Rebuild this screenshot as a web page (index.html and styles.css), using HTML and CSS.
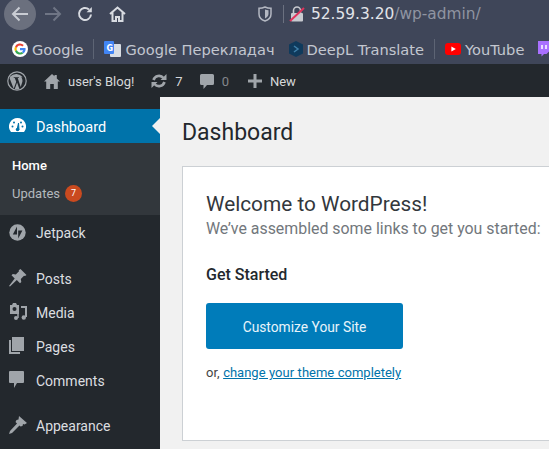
FILE: index.html

```html
<!DOCTYPE html>
<html lang="en">

<head>
    <meta charset="UTF-8" />
    <meta name="viewport" content="width=device-width, initial-scale=1.0" />
    <title>Dashboard</title>

    <link rel="stylesheet" href="styles.css">
</head>

<body>
    <header class="browser">
        <div class="nav-row">
            <div class="back-btn">
                <svg width="18" height="16" viewBox="0 0 18 16" fill="none" stroke="#c9ccd3" stroke-width="2">
                    <path d="M17 8H2M8.500 1.500L2 8l6.500 6.500" />
                </svg>
            </div>
            <svg class="nav-icon forward" width="18" height="16" viewBox="0 0 18 16" fill="none" stroke="#6f7585" stroke-width="2">
                <path d="M1 8h15M9.500 1.500L16 8l-6.500 6.500" />
            </svg>
            <svg class="nav-icon reload" width="16" height="16" viewBox="0 0 16 16" fill="none" stroke="#d8dbe1" stroke-width="2">
                <path d="M14 8.500A6 6 0 1 1 12 3.500" />
                <path d="M14.800 1v5.200H9.600z" fill="#d8dbe1" stroke="none" />
            </svg>
            <svg class="nav-icon home" width="17" height="16" viewBox="0 0 17 16" fill="none" stroke="#d8dbe1" stroke-width="2">
                <path d="M1 8l7.500-6.500L16 8M3.500 6.500V15h3.500v-4h3v4h3.500V6.500" />
            </svg>
            <svg class="shield" width="14" height="16" viewBox="0 0 14 16" fill="none" stroke="#b4b8c2" stroke-width="1.500">
                <path d="M7 1c2 1 4 1.300 6 1.300V8c0 3.500-3 6-6 7-3-1-6-3.500-6-7V2.300C3 2.300 5 2 7 1z" />
                <path d="M7 3.500c1 .5 2.500.7 3.500.7V8c0 2-2 3.800-3.500 4.500z" fill="#b4b8c2" stroke="none" />
            </svg>
            <div class="url-sep"></div>
            <svg class="lock" width="16" height="18" viewBox="0 0 16 18">
                <path d="M4.500 8V5.500a3.500 3.500 0 0 1 7 0V8" fill="none" stroke="#c8cad0" stroke-width="1.600" />
                <rect x="2" y="8" width="12" height="8.500" rx="1" fill="#c8cad0" />
                <path d="M1 16L15 3" stroke="#e0335c" stroke-width="2" />
            </svg>
            <div class="url"><span class="url-host">52.59.3.20</span>/wp-admin/</div>
        </div>
        <div class="bookmarks">
            <span class="bookmark">
                <svg width="16" height="16" viewBox="0 0 16 16">
                    <circle cx="8" cy="8" r="8" fill="#fff" />
                    <path d="M8 4.600a3.400 3.400 0 0 1 2.300.9l1.500-1.500A5.600 5.600 0 0 0 3 5.600l1.800 1.300A3.400 3.400 0 0 1 8 4.600z" fill="#ea4335" />
                    <path d="M4.800 6.900L3 5.600a5.600 5.600 0 0 0 0 4.800l1.800-1.300a3.400 3.400 0 0 1 0-2.200z" fill="#fbbc05" />
                    <path d="M4.800 9.100L3 10.400a5.600 5.600 0 0 0 8.500 1.900l-1.700-1.300a3.400 3.400 0 0 1-5-1.900z" fill="#34a853" />
                    <path d="M13.500 7H8v2.200h3.200a2.800 2.800 0 0 1-1.400 1.800l1.700 1.300A5.500 5.500 0 0 0 13.500 7z" fill="#4285f4" />
                </svg>
                Google
            </span>
            <span class="bm-sep"></span>
            <span class="bookmark">
                <svg width="17" height="16" viewBox="0 0 17 16">
                    <rect x="6" y="3" width="11" height="13" rx="1" fill="#d9dde3" />
                    <rect width="10" height="13" rx="1" fill="#4285f4" />
                    <text x="2.500" y="9.500" class="gt-letter">G</text>
                </svg>
                Google Перекладач
            </span>
            <span class="bookmark deepl">
                <svg width="14" height="16" viewBox="0 0 14 16">
                    <path d="M7 0l7 3.500v9L7 16l-7-3.500v-9z" fill="#0f3a5c" />
                    <path d="M5 5l4 3-4 3" fill="none" stroke="#3f7fa8" stroke-width="1.500" />
                </svg>
                DeepL Translate
            </span>
            <span class="bm-sep"></span>
            <span class="bookmark">
                <svg width="16" height="12" viewBox="0 0 16 12">
                    <rect width="16" height="12" rx="3" fill="#f00" />
                    <path d="M6.400 3.400L10.800 6l-4.400 2.600z" fill="#fff" />
                </svg>
                YouTube
            </span>
            <svg class="twitch" width="14" height="16" viewBox="0 0 14 16">
                <path d="M2 0h12v9.500L10.500 13H8l-2.500 2.500V13H2z" fill="#a970ff" />
                <path d="M6 4v4M10 4v4" stroke="#fff" stroke-width="1.500" />
            </svg>
        </div>
    </header>

    <nav class="admin-bar">
        <svg class="bar-wp" width="20" height="20" viewBox="0 0 20 20">
            <circle cx="10" cy="10" r="9.200" fill="none" stroke="#a0a5aa" stroke-width="1.200" />
            <path d="M2.600 7.200L6.700 17.800 9.200 10.800 7.800 7.100H6.700V6.300h5.200v.8h-1.200l3 9 1.600-5.200c.5-1.800-.2-3.800-1-4.700.9-.2 1.500.1 1.500.1l-.1-.1A8.200 8.200 0 0 0 3.200 5.500z" fill="#a0a5aa" />
            <path d="M10.100 11.600l-2.300 6.500c1.500.4 3.100.4 4.600-.1z" fill="#a0a5aa" />
        </svg>
        <span class="bar-item site">
            <svg width="16" height="15" viewBox="0 0 16 15">
                <path d="M8 0l2.500 2.300V1h2.300v3.500L16 7.500h-2.200V15H9.800v-5H6.200v5H2.200V7.500H0z" fill="#a0a5aa" />
            </svg>
            user's Blog!
        </span>
        <span class="bar-item updates">
            <svg width="16" height="14" viewBox="0 0 16 14" fill="none" stroke="#a0a5aa" stroke-width="2.600">
                <path d="M2.500 6a5.800 5.800 0 0 1 10-2M13.500 8a5.800 5.800 0 0 1-10 2" />
                <path d="M15.500 0v6h-6zM.5 14V8h6z" fill="#a0a5aa" stroke="none" />
            </svg>
            7
        </span>
        <span class="bar-item comments">
            <svg width="14" height="15" viewBox="0 0 14 15">
                <path d="M1.500 0h11A1.500 1.500 0 0 1 14 1.500v8a1.500 1.500 0 0 1-1.500 1.500H7l-3.500 4v-4h-2A1.500 1.500 0 0 1 0 9.500v-8A1.500 1.500 0 0 1 1.500 0z" fill="#a0a5aa" />
            </svg>
            <span class="zero">0</span>
        </span>
        <span class="bar-item new">
            <svg width="14" height="14" viewBox="0 0 14 14">
                <path d="M5.500 0h3v5.500H14v3H8.500V14h-3V8.500H0v-3h5.500z" fill="#a0a5aa" />
            </svg>
            New
        </span>
    </nav>

    <div class="layout">
        <aside class="sidebar">
            <div class="menu-item current">
                <svg class="menu-icon" width="17" height="15" viewBox="0 0 17 15">
                    <path d="M8.500 0a8.500 8.500 0 0 0-7 13.300l.5.700h13l.5-.7a8.500 8.500 0 0 0-7-13.300z" fill="#fff" />
                    <path d="M8 12l1.500-7 .5 7z" fill="#0073aa" stroke="#0073aa" />
                    <circle cx="8.500" cy="11.500" r="1.700" fill="#0073aa" />
                    <circle cx="3.500" cy="8.500" r="1" fill="#0073aa" />
                    <circle cx="5" cy="4.500" r="1" fill="#0073aa" />
                    <circle cx="13.500" cy="8.500" r="1" fill="#0073aa" />
                    <circle cx="12" cy="4.500" r="1" fill="#0073aa" />
                </svg>
                Dashboard
            </div>
            <div class="submenu">
                <div class="sub-item active">Home</div>
                <div class="sub-item">Updates <span class="badge">7</span></div>
            </div>
            <div class="menu-item jetpack">
                <svg class="menu-icon" width="17" height="17" viewBox="0 0 17 17">
                    <circle cx="8.500" cy="8.500" r="8.200" fill="#a0a5aa" />
                    <path d="M8 2.500v8H3.800zM9.200 14.500v-8h4.200z" fill="#23282d" />
                </svg>
                Jetpack
            </div>
            <div class="menu-group">
                <div class="menu-item">
                    <svg class="menu-icon" width="18" height="18" viewBox="0 0 18 18">
                        <path d="M11.500 0l6 6-1.500 1-1-.3-3.200 3.200.5 3-1.300 1.300-3.200-3.200L1 17.500 0 17l5.700-7.500L2.500 6.300l1.300-1.300 3 .5L10 2.300l-.3-1z" fill="#a0a5aa" />
                    </svg>
                    Posts
                </div>
                <div class="menu-item">
                    <svg class="menu-icon" width="18" height="17" viewBox="0 0 18 17">
                        <path d="M1 2h2l1-2h3l1 2h2v9H1z" fill="#a0a5aa" />
                        <circle cx="5.500" cy="6" r="2" fill="#23282d" />
                        <path d="M12 4h5v10" fill="none" stroke="#a0a5aa" stroke-width="2" />
                        <circle cx="14.800" cy="14.500" r="2.200" fill="#a0a5aa" />
                        <path d="M9 10v5" stroke="#a0a5aa" stroke-width="1.500" />
                        <circle cx="7" cy="15" r="2" fill="#a0a5aa" />
                    </svg>
                    Media
                </div>
                <div class="menu-item">
                    <svg class="menu-icon" width="15" height="17" viewBox="0 0 15 17">
                        <rect x="3" width="12" height="14" fill="#a0a5aa" />
                        <path d="M1 3v13h10" fill="none" stroke="#a0a5aa" stroke-width="2" />
                    </svg>
                    Pages
                </div>
                <div class="menu-item">
                    <svg class="menu-icon" width="15" height="17" viewBox="0 0 15 17">
                        <path d="M1 0h13a1 1 0 0 1 1 1v10a1 1 0 0 1-1 1H8l-3 5v-5H1a1 1 0 0 1-1-1V1a1 1 0 0 1 1-1z" fill="#a0a5aa" />
                    </svg>
                    Comments
                </div>
            </div>
            <div class="menu-item appearance">
                <svg class="menu-icon" width="18" height="18" viewBox="0 0 18 18">
                    <path d="M10 0l8 7-2.500 1.500-1.500-.5-.5 2-2 .5-1-1L3 17l-3 1 1-3 7-7.500-1.500-1.500 1-2 2-.5z" fill="#a0a5aa" />
                </svg>
                Appearance
            </div>
        </aside>

        <main class="content">
            <h1 class="page-title">Dashboard</h1>
            <section class="welcome">
                <h2>Welcome to WordPress!</h2>
                <p class="about">We’ve assembled some links to get you started:</p>
                <h3>Get Started</h3>
                <a class="customize" href="#">Customize Your Site</a>
                <p class="or-line">or, <a href="#">change your theme completely</a></p>
            </section>
        </main>
    </div>
</body>

</html>
```

FILE: styles.css

```css
html,
body {
    margin: 0;
    height: 449px;
    overflow: hidden;
}

body {
    font-family: Roboto, sans-serif;
    background: #f1f1f1;
    display: flex;
    flex-direction: column;
}

/* ========== BROWSER CHROME ========== */
.browser {
    height: 64px;
    flex: none;
    background: #3f4659;
    font-family: "DejaVu Sans", sans-serif;
    overflow: hidden;
}

.nav-row {
    height: 28px;
    display: flex;
    align-items: center;
}

.back-btn {
    width: 32px;
    height: 32px;
    margin-left: 4px;
    margin-top: -1px;
    border-radius: 50%;
    background: #6b707e;
    flex: none;
    display: flex;
    align-items: center;
    justify-content: center;
}

.nav-icon {
    flex: none;
}

.forward {
    margin-left: 8px;
}

.reload {
    margin-left: 15px;
}

.home {
    margin-left: 16px;
}

.shield {
    margin-left: 132px;
    flex: none;
}

.url-sep {
    width: 1px;
    height: 18px;
    background: #6b7180;
    margin-left: 11px;
}

.lock {
    margin-left: 5px;
    flex: none;
}

.url {
    margin-left: 6px;
    font-size: 15.4px;
    color: #8f94a1;
    white-space: nowrap;
}

.url-host {
    color: #e2e4e9;
}

.bookmarks {
    height: 30px;
    margin-top: 6px;
    display: flex;
    align-items: center;
    padding-left: 12px;
    font-size: 14.6px;
    color: #c3c7d0;
    white-space: nowrap;
}

.bookmark {
    display: flex;
    align-items: center;
    gap: 4px;
    flex: none;
}

.bm-sep {
    width: 1px;
    height: 20px;
    background: #5d6474;
    margin: 0 10px;
    flex: none;
}

.deepl {
    margin-left: 14px;
}

.gt-letter {
    font-size: 8px;
    font-weight: bold;
    fill: #fff;
}

.twitch {
    margin-left: 12px;
    flex: none;
}

/* ========== ADMIN BAR ========== */
.admin-bar {
    height: 33px;
    box-sizing: border-box;
    flex: none;
    background: #23282d;
    color: #d6d8da;
    font-size: 13px;
    display: flex;
    align-items: center;
    padding: 1px 0 0 7px;
    white-space: nowrap;
}

.bar-wp {
    flex: none;
}

.bar-item {
    display: flex;
    align-items: center;
    gap: 8px;
}

.site {
    margin-left: 17px;
}

.updates {
    margin-left: 17px;
}

.comments {
    margin-left: 17px;
}

.zero {
    color: #83878b;
}

.new {
    margin-left: 19px;
}

/* ========== LAYOUT ========== */
.layout {
    flex: 1;
    display: flex;
    min-height: 0;
}

.sidebar {
    width: 160px;
    flex: none;
    background: #23282d;
    padding-top: 12px;
    color: #dcdee0;
    font-size: 14px;
}

.menu-item {
    height: 34px;
    box-sizing: border-box;
    display: flex;
    align-items: center;
    position: relative;
    padding: 1px 0 0 36px;
}

.menu-icon {
    position: absolute;
    left: 9px;
    top: 8px;
}

.current {
    background: #0073aa;
    color: #fff;
    font-size: 14.5px;
    padding-top: 3px;
}

.current .menu-icon {
    top: 9px;
}

.current::after {
    content: "";
    position: absolute;
    right: 0;
    top: 9px;
    border: 8px solid transparent;
    border-right-color: #f1f1f1;
    border-left-width: 0;
}

.submenu {
    background: #32373c;
    height: 72px;
    box-sizing: border-box;
    padding-top: 8px;
    font-size: 13px;
    color: #b4b9be;
}

.sub-item {
    height: 28px;
    padding-left: 12px;
    display: flex;
    align-items: center;
    gap: 5px;
}

.active {
    color: #fff;
    font-weight: 500;
}

.badge {
    width: 17px;
    height: 17px;
    border-radius: 50%;
    background: #ca4a1f;
    color: #fff;
    font-size: 9px;
    display: flex;
    align-items: center;
    justify-content: center;
}

.jetpack {
    margin-top: 1px;
    padding-top: 0;
}

.menu-group {
    margin-top: 11px;
}

.appearance {
    margin-top: 11px;
}

/* ========== CONTENT ========== */
.content {
    flex: 1;
    min-width: 0;
    padding: 21px 0 0 22px;
}

.page-title {
    margin: 0;
    font-size: 23px;
    font-weight: 400;
    line-height: 30px;
    color: #23282d;
}

.welcome {
    margin-top: 18px;
    height: 275px;
    box-sizing: border-box;
    background: #fff;
    border: 1px solid #ccd0d4;
    border-right: 0;
    padding: 23px 0 0 23px;
    color: #32373c;
    overflow: hidden;
}

.welcome h2 {
    margin: 0;
    font-size: 20.8px;
    font-weight: 400;
    line-height: 28px;
}

.about {
    margin: 0;
    font-size: 15.9px;
    line-height: 22px;
    color: #72777c;
    white-space: nowrap;
}

.welcome h3 {
    margin: 23px 0 0;
    font-size: 16px;
    font-weight: 500;
    line-height: 24px;
    color: #23282d;
}

.customize {
    display: flex;
    align-items: center;
    justify-content: center;
    width: 197px;
    height: 46px;
    box-sizing: border-box;
    padding-top: 1px;
    margin-top: 16px;
    border-radius: 3px;
    background: #007cba;
    color: #e8f4fa;
    font-size: 13.8px;
    text-decoration: none;
}

.or-line {
    margin: 14px 0 0;
    font-size: 13px;
    line-height: 20px;
    color: #444;
    word-spacing: 0.3px;
}

.or-line a {
    color: #0073aa;
}
```
